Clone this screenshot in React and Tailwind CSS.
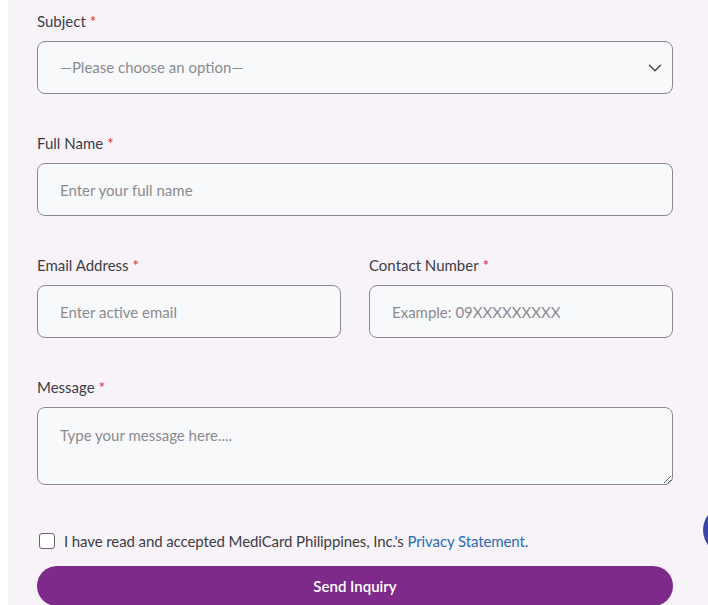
import { ChevronDown } from "lucide-react";

function Label({ children }) {
  return (
    <label className="block text-[15px] leading-5 text-[#3d3d45] mb-[10px]">
      {children}
      <span className="text-[#e0262f] ml-1">*</span>
    </label>
  );
}

const inputCls =
  "w-full h-[53px] rounded-lg border border-[#8a8a8e] bg-[#f8f9fb] px-[22px] text-[15px] text-[#3d3d45] placeholder:text-[#8b8b8f] outline-none";

export default function App() {
  return (
    <div
      className="w-[708px] h-[605px] overflow-hidden bg-white flex"
      style={{ fontFamily: "Lato, 'Noto Sans', sans-serif" }}
    >
      <div className="relative ml-2 flex-1 bg-[#f8f3f8] pl-[29px] pr-[35px] pt-[11px]">
        <div className="mb-[39px]">
          <Label>Subject</Label>
          <div className="relative">
            <select className={inputCls + " appearance-none text-[#8b8b8f]"} defaultValue="">
              <option value="">—Please choose an option—</option>
            </select>
            <ChevronDown
              className="absolute right-[7px] top-1/2 -translate-y-1/2 w-[22px] h-[22px] text-[#4a4a4a]"
              strokeWidth={1.6}
            />
          </div>
        </div>

        <div className="mb-[39px]">
          <Label>Full Name</Label>
          <input className={inputCls} placeholder="Enter your full name" />
        </div>

        <div className="mb-[39px] grid grid-cols-2 gap-[28px]">
          <div>
            <Label>Email Address</Label>
            <input className={inputCls} placeholder="Enter active email" />
          </div>
          <div>
            <Label>Contact Number</Label>
            <input className={inputCls} placeholder="Example: 09XXXXXXXXX" />
          </div>
        </div>

        <div className="mb-[46px]">
          <Label>Message</Label>
          <textarea
            className="block w-full h-[78px] rounded-lg border border-[#8a8a8e] bg-[#f8f9fb] px-[22px] py-[16px] text-[15px] text-[#3d3d45] placeholder:text-[#8b8b8f] outline-none"
            placeholder="Type your message here...."
          />
        </div>

        <div className="flex items-center gap-[9px] pl-[2px] mb-[15px]">
          <input
            type="checkbox"
            className="appearance-none w-4 h-4 rounded-[3px] border border-[#666] bg-white"
          />
          <span className="text-[15px] leading-5 text-[#3d3d45] tracking-[-0.1px]">
            I have read and accepted MediCard Philippines, Inc.'s{" "}
            <a className="text-[#2d6cb2]">Privacy Statement.</a>
          </span>
        </div>

        <button className="w-full h-10 rounded-full bg-[#7d2a8b] text-white text-[15px] font-semibold">
          Send Inquiry
        </button>

        <div className="absolute right-[-45px] top-[505px] w-[50px] h-[50px] rounded-full bg-[#3b45a9]" />
      </div>
    </div>
  );
}
